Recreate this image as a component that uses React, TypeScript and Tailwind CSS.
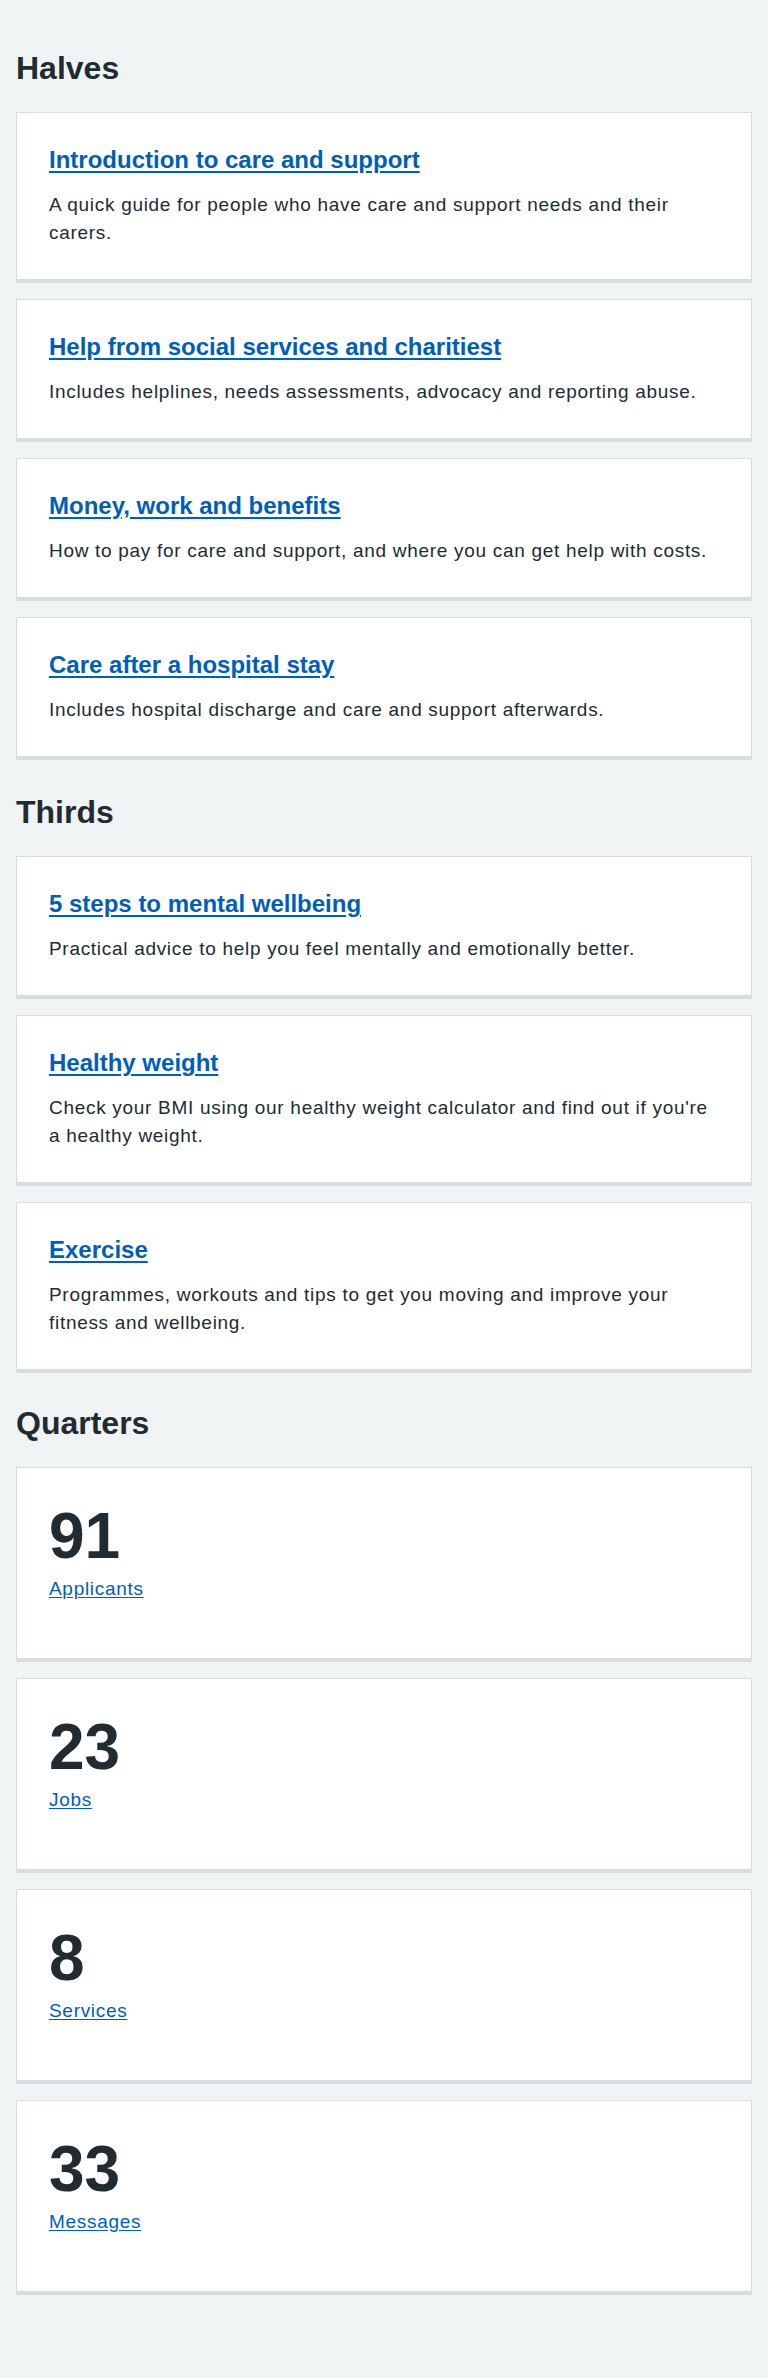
import React from 'react';

interface TextCard {
    title: string;
    desc: string;
}

interface StatCard {
    value: string;
    label: string;
}

const halves: TextCard[] = [
    { title: 'Introduction to care and support', desc: 'A quick guide for people who have care and support needs and their carers.' },
    { title: 'Help from social services and charitiest', desc: 'Includes helplines, needs assessments, advocacy and reporting abuse.' },
    { title: 'Money, work and benefits', desc: 'How to pay for care and support, and where you can get help with costs.' },
    { title: 'Care after a hospital stay', desc: 'Includes hospital discharge and care and support afterwards.' },
];

const thirds: TextCard[] = [
    { title: '5 steps to mental wellbeing', desc: 'Practical advice to help you feel mentally and emotionally better.' },
    { title: 'Healthy weight', desc: "Check your BMI using our healthy weight calculator and find out if you're a healthy weight." },
    { title: 'Exercise', desc: 'Programmes, workouts and tips to get you moving and improve your fitness and wellbeing.' },
];

const quarters: StatCard[] = [
    { value: '91', label: 'Applicants' },
    { value: '23', label: 'Jobs' },
    { value: '8', label: 'Services' },
    { value: '33', label: 'Messages' },
];

const SectionHeading = ({ children, className = '' }: { children: React.ReactNode; className?: string }) => (
    <h2 className={`text-[32px] leading-10 font-bold text-[#212b32] mb-6 ${className}`}>{children}</h2>
);

const Card = ({ children }: { children: React.ReactNode }) => (
    <li className="bg-white border border-[#d8dde0] border-b-4 p-8">{children}</li>
);

const LinkCard = ({ title, desc }: TextCard) => (
    <Card>
        <h3 className="text-[24px] leading-[30px] font-bold mb-4">
            <a href="#" className="text-[#005eb8] underline underline-offset-[3px]">{title}</a>
        </h3>
        <p className="text-[19px] leading-7 tracking-[0.7px]">{desc}</p>
    </Card>
);

export default function App() {
    return (
        <div className="min-h-screen bg-[#f0f4f5] px-4 pt-12 pb-20 text-[#212b32] font-['Liberation_Sans',Arial,sans-serif]">

            {/* Halves */}
            <SectionHeading>Halves</SectionHeading>
            <ul className="flex flex-col gap-4">
                {halves.map((c) => <LinkCard key={c.title} {...c} />)}
            </ul>

            {/* Thirds */}
            <SectionHeading className="mt-8">Thirds</SectionHeading>
            <ul className="flex flex-col gap-4">
                {thirds.map((c) => <LinkCard key={c.title} {...c} />)}
            </ul>

            {/* Quarters */}
            <SectionHeading className="mt-[30px]">Quarters</SectionHeading>
            <ul className="flex flex-col gap-4">
                {quarters.map((c) => (
                    <Card key={c.label}>
                        <p className="text-[64px] leading-[72px] font-bold mb-[3px]">{c.value}</p>
                        <p className="text-[19px] leading-7 tracking-[0.7px] mb-[23px]">
                            <a href="#" className="text-[#005eb8] underline underline-offset-2">{c.label}</a>
                        </p>
                    </Card>
                ))}
            </ul>
        </div>
    );
}
